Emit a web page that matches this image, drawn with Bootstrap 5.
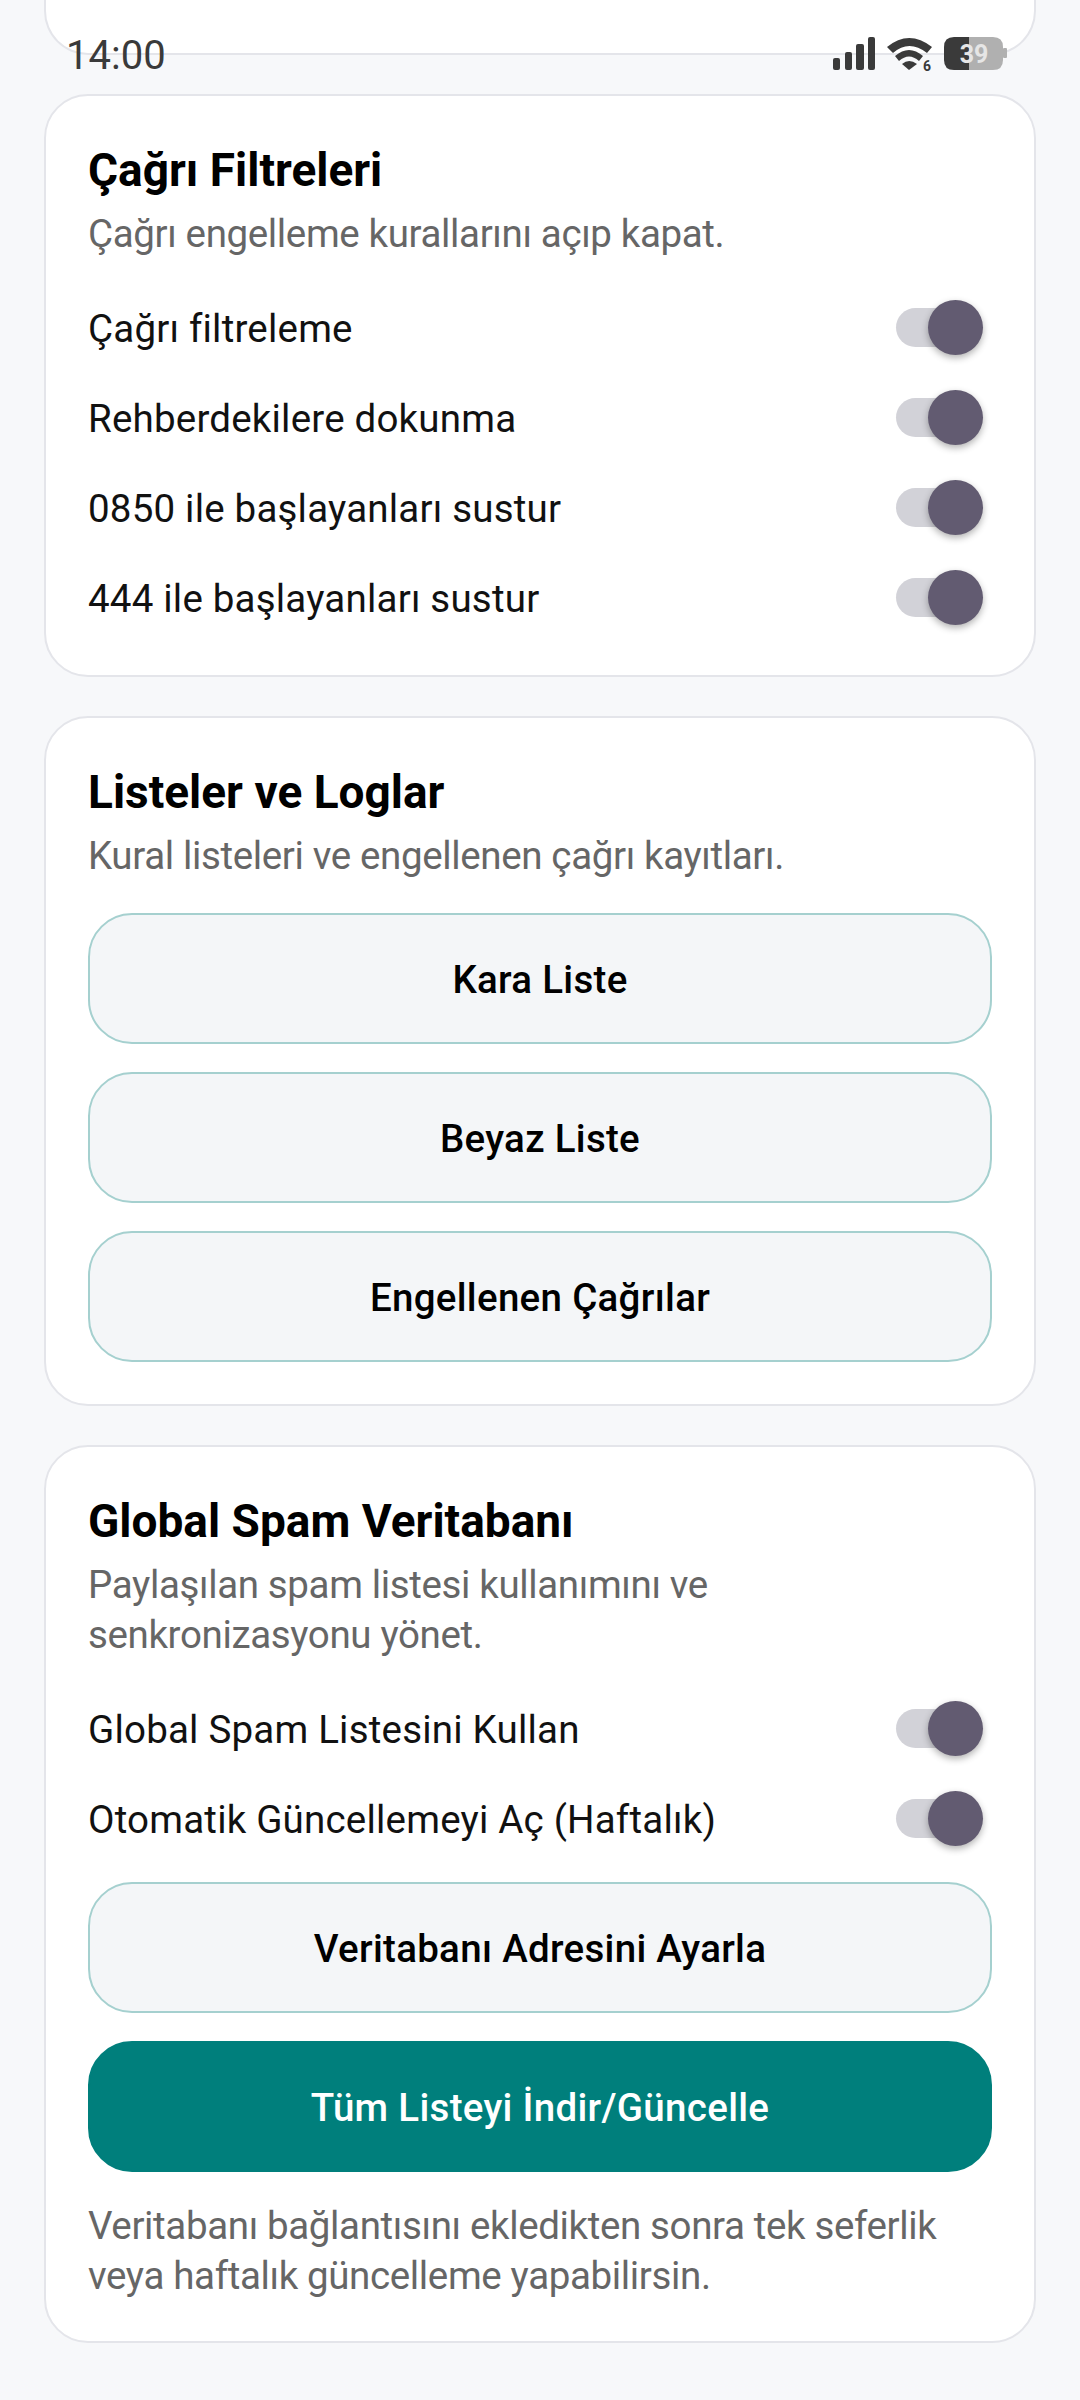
<!DOCTYPE html>
<html lang="tr">

<head>
    <meta charset="UTF-8">
    <meta name="viewport" content="width=device-width, initial-scale=1">
    <title>Ayarlar</title>
    <link href="https://cdn.jsdelivr.net/npm/bootstrap@5.3.3/dist/css/bootstrap.min.css" rel="stylesheet">
    <style>
        body {
            margin: 0;
            height: 2400px;
            overflow: hidden;
            background: #f7f8fa;
            font-family: Roboto, "Noto Sans", sans-serif;
        }

        .page-wrap {
            position: relative;
            padding: 0 44px;
        }

        .panel {
            background: #fff;
            border: 2px solid #e4e5ea;
            border-radius: 44px;
            padding: 47px 42px 42px;
            margin-bottom: 39px;
        }

        .panel-top {
            height: 55px;
            padding: 0;
            border-top: 0;
            border-top-left-radius: 0;
            border-top-right-radius: 0;
        }

        .panel-title {
            font-size: 46px;
            line-height: 54px;
            font-weight: 700;
            color: #000;
            margin: 0 0 12px;
        }

        .panel-sub {
            font-size: 38.5px;
            line-height: 50px;
            letter-spacing: -.36px;
            color: #666;
            margin: 0;
        }

        .sub-gap {
            margin-bottom: 23px;
        }

        .sub-gap-btn {
            margin-bottom: 32px;
        }

        .opt-row {
            height: 90px;
            font-size: 38.5px;
            letter-spacing: .2px;
            color: #111;
        }

        .opt-label {
            padding-top: 3px;
        }

        .fake-switch {
            position: relative;
            width: 77px;
            height: 39px;
            margin-right: 19px;
            border-radius: 20px;
            background: #d2d2d8;
        }

        .fake-switch::after {
            content: "";
            position: absolute;
            right: -10px;
            top: -8px;
            width: 55px;
            height: 55px;
            border-radius: 50%;
            background: #625b71;
            box-shadow: 0 3px 7px rgba(0, 0, 0, .3);
        }

        .btn-stack {
            gap: 28px;
        }

        .act-btn {
            height: 131px;
            padding-top: 8px;
            padding-bottom: 5px;
            font-size: 38.5px;
            font-weight: 500;
            letter-spacing: .3px;
            color: #000;
            background: #f4f6f8;
            border: 2px solid #a5d0cf;
            border-radius: 44px;
        }

        .act-btn-solid {
            color: #fff;
            background: #007f7c;
            border-color: #007f7c;
        }

        .row-tail {
            margin-bottom: -9px;
        }

        .stack-top {
            margin-top: 19px;
        }

        .note-text {
            margin-top: 29px;
            margin-bottom: -2px;
        }

        .status-bar {
            position: absolute;
            top: 0;
            left: 0;
            right: 0;
            height: 80px;
            padding: 33px 73px 0 66px;
            color: #3a3a3a;
        }

        .status-bar svg {
            margin-top: 4px;
        }

        .clock {
            font-size: 40px;
            line-height: 46px;
        }
    </style>
</head>

<body>
    <div class="page-wrap">
        <div class="panel panel-top"></div>

        <section class="panel">
            <h2 class="panel-title">Çağrı Filtreleri</h2>
            <p class="panel-sub sub-gap">Çağrı engelleme kurallarını açıp kapat.</p>
            <div class="d-flex flex-column row-tail">
                <div class="opt-row d-flex align-items-center justify-content-between"><span class="opt-label">Çağrı filtreleme</span><span class="fake-switch"></span></div>
                <div class="opt-row d-flex align-items-center justify-content-between"><span class="opt-label">Rehberdekilere dokunma</span><span class="fake-switch"></span></div>
                <div class="opt-row d-flex align-items-center justify-content-between"><span class="opt-label">0850 ile başlayanları sustur</span><span class="fake-switch"></span></div>
                <div class="opt-row d-flex align-items-center justify-content-between"><span class="opt-label">444 ile başlayanları sustur</span><span class="fake-switch"></span></div>
            </div>
        </section>

        <section class="panel">
            <h2 class="panel-title">Listeler ve Loglar</h2>
            <p class="panel-sub sub-gap-btn">Kural listeleri ve engellenen çağrı kayıtları.</p>
            <div class="d-grid btn-stack">
                <button class="btn act-btn" type="button">Kara Liste</button>
                <button class="btn act-btn" type="button">Beyaz Liste</button>
                <button class="btn act-btn" type="button">Engellenen Çağrılar</button>
            </div>
        </section>

        <section class="panel">
            <h2 class="panel-title">Global Spam Veritabanı</h2>
            <p class="panel-sub sub-gap">Paylaşılan spam listesi kullanımını ve<br>senkronizasyonu yönet.</p>
            <div class="opt-row d-flex align-items-center justify-content-between"><span class="opt-label">Global Spam Listesini Kullan</span><span class="fake-switch"></span></div>
            <div class="opt-row d-flex align-items-center justify-content-between"><span class="opt-label">Otomatik Güncellemeyi Aç (Haftalık)</span><span class="fake-switch"></span></div>
            <div class="d-grid btn-stack stack-top">
                <button class="btn act-btn" type="button">Veritabanı Adresini Ayarla</button>
                <button class="btn act-btn act-btn-solid" type="button">Tüm Listeyi İndir/Güncelle</button>
            </div>
            <p class="panel-sub note-text">Veritabanı bağlantısını ekledikten sonra tek seferlik<br>veya haftalık güncelleme yapabilirsin.</p>
        </section>

        <div class="status-bar d-flex justify-content-between align-items-start">
            <span class="clock">14:00</span>
            <svg width="174" height="36" viewBox="0 0 174 36">
                <g fill="#3a3a3a">
                    <rect x="0" y="21" width="7" height="12" rx="2" />
                    <rect x="12" y="15" width="7" height="18" rx="2" />
                    <rect x="23" y="7" width="8" height="26" rx="2" />
                    <rect x="35" y="0" width="7" height="33" rx="2" />
                    <path d="M54 10 Q76 -8 99 10 L94 16 Q76 2 60 16 Z" />
                    <path d="M62 19 Q76 7 90 19 L86 24 Q76 15 66 24 Z" />
                    <path d="M69 27 Q76 21 84 27 L76 33 Z" />
                </g>
                <text x="90" y="34" font-family="Roboto" font-size="14" font-weight="700" fill="#3a3a3a">6</text>
                <path d="M136 0 H160 Q170 0 170 10 V23 Q170 33 160 33 H136 Z" fill="#b0b0b0" />
                <rect x="170" y="11" width="4" height="10" rx="1" fill="#b0b0b0" />
                <path d="M136 0 H121 Q111 0 111 10 V23 Q111 33 121 33 H136 Z" fill="#3a3a3a" />
                <text x="141" y="26" text-anchor="middle" font-family="Roboto" font-size="25" font-weight="700" fill="#e6e6e6">39</text>
            </svg>
        </div>
    </div>
    <script src="https://cdn.jsdelivr.net/npm/bootstrap@5.3.3/dist/js/bootstrap.bundle.min.js"></script>
</body>

</html>
